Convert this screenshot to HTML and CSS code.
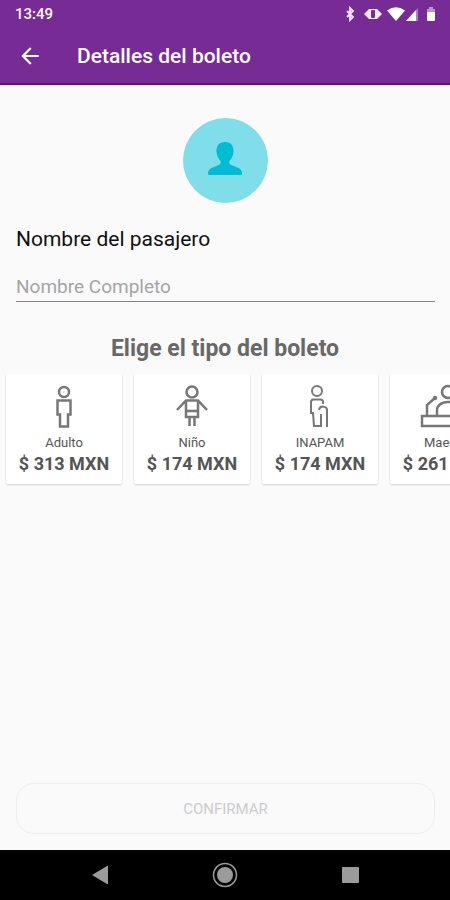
FILE: index.html
```html
<!DOCTYPE html>
<html lang="es">
<head>
  <meta charset="UTF-8">
  <meta name="viewport" content="width=device-width, initial-scale=1.0">
  <title>Detalles del boleto</title>
  <link rel="stylesheet" href="styles.css">
</head>
<body>
  <header class="header">
    <!-- status bar -->
    <div class="status">
      <span class="clock">13:49</span>
      <svg class="status-icons" viewBox="0 0 94 16" width="94" height="16" fill="#fff">
        <path d="M3 5l6 6-3 3V2l3 3-6 6" fill="none" stroke="#fff" stroke-opacity=".9" stroke-width="1.800"/>
        <path d="M20 8l3-3 2-2h8l2 2 3 3-3 3-2 2h-8l-2-2z" opacity=".9"/>
        <rect x="27" y="4" width="4" height="8" rx="1" fill="#772b95"/>
        <path d="M43 4.500Q52-2 61 4.500L52 15z"/>
        <path d="M62 15L74 2v13z" opacity=".4"/>
        <path d="M62 15l10-11v11z"/>
        <path d="M83 3h2V1h4v2h2v3h-8z" opacity=".5"/>
        <path d="M83 6h8v8q0 1-1 1h-6q-1 0-1-1z"/>
      </svg>
    </div>
    <div class="toolbar">
      <a class="back" href="#" aria-label="Volver">
        <svg viewBox="0 0 24 24" width="26" height="26" fill="#fff"><path d="M20 11H7.830l5.590-5.590L12 4l-8 8 8 8 1.410-1.410L7.830 13H20z"/></svg>
      </a>
      <h1 class="title">Detalles del boleto</h1>
    </div>
  </header>

  <main class="content">
    <div class="avatar">
      <svg viewBox="0 0 36 36" width="36" height="36" fill="#00bcd4">
        <path d="M18 1c6 0 9 4 8.500 10-.3 4-2 7-4 9-1 2 .5 3.500 3 4.500l6 2.500c2.500 1 3.500 3 3.500 5.500 0 1-.5 1.500-1.500 1.500h-31C1.500 34 1 33.500 1 32.500 1 30 2 28 4.500 27l6-2.500c2.500-1 4-2.500 3-4.500-2-2-3.700-5-4-9C9 5 12 1 18 1z"/>
      </svg>
    </div>

    <div class="field">
      <label class="field-label" for="nombre">Nombre del pasajero</label>
      <input class="field-input" id="nombre" type="text" placeholder="Nombre Completo">
    </div>

    <h2 class="subtitle">Elige el tipo del boleto</h2>
    <div class="tickets">
      <button class="ticket" type="button">
        <svg class="ticket-icon" viewBox="0 0 44 44" width="44" height="44">
          <circle cx="22" cy="7" r="5"/>
          <path d="M15.500 15.500h13v14h-2.500v12h-8v-12h-2.500z"/>
        </svg>
        <span class="ticket-name">Adulto</span>
        <strong class="ticket-price">$ 313 MXN</strong>
      </button>
      <button class="ticket" type="button">
        <svg class="ticket-icon" viewBox="0 0 44 44" width="44" height="44">
          <circle cx="22" cy="7" r="5.500"/>
          <path d="M7 25l9-9.500h12l9 9.500M16 16v16h12V16M16 26h12M19.500 33v8M24.500 33v8"/>
        </svg>
        <span class="ticket-name">Niño</span>
        <strong class="ticket-price">$ 174 MXN</strong>
      </button>
      <button class="ticket" type="button">
        <svg class="ticket-icon thin" viewBox="0 0 44 44" width="44" height="44">
          <circle cx="19" cy="6" r="5"/>
          <path d="M25 19v-2q0-2.500-2.500-2.500h-7q-2.500 0-2.500 2.500v11h2l1 13h7v-12M21 25c1-5 8-4 8 0v17"/>
        </svg>
        <span class="ticket-name">INAPAM</span>
        <strong class="ticket-price">$ 174 MXN</strong>
      </button>
      <button class="ticket" type="button">
        <svg class="ticket-icon" viewBox="0 0 44 44" width="44" height="44">
          <circle cx="22" cy="7" r="6"/>
          <path d="M-4 31h52v10H-4zM1 31V20l8-7M11 30v-5c0-4 4-8 11-8s11 4 11 8v5"/>
          <circle cx="9" cy="13" r="1"/>
        </svg>
        <span class="ticket-name">Maestro</span>
        <strong class="ticket-price">$ 261 MXN</strong>
      </button>
    </div>

    <button class="confirm" type="button" disabled>CONFIRMAR</button>
  </main>

  <!-- system navigation -->
  <nav class="navbar">
    <button class="nav-btn" type="button" aria-label="Atrás">
      <svg viewBox="0 0 28 28" width="28" height="28" fill="#9b9b9b"><path d="M6 14l15-9q1-.5 1 .5v17q0 1-1 .5z"/></svg>
    </button>
    <button class="nav-btn" type="button" aria-label="Inicio">
      <svg viewBox="0 0 28 28" width="28" height="28" fill="#9b9b9b"><circle cx="14" cy="14" r="8"/><circle cx="14" cy="14" r="11.500" fill="none" stroke="#9b9b9b" stroke-width="1.500"/></svg>
    </button>
    <button class="nav-btn" type="button" aria-label="Recientes">
      <svg viewBox="0 0 28 28" width="28" height="28" fill="#9b9b9b"><rect x="6" y="6" width="17" height="16" rx="1"/></svg>
    </button>
  </nav>
</body>
</html>
```
FILE: styles.css
```css
* {
  margin: 0;
  padding: 0;
  box-sizing: border-box;
}
body {
  display: flex;
  flex-direction: column;
  min-height: 100vh;
  font-family: Roboto, "Liberation Sans", sans-serif;
  background: #fafafa;
  overflow-x: hidden;
}
button {
  font-family: inherit;
  border: none;
  background: none;
}
.header {
  color: #fff;
  background: #772b95;
  border-bottom: 2px solid #650c82;
}
.status {
  display: flex;
  justify-content: space-between;
  align-items: center;
  height: 28px;
  padding: 0 12px 0 15px;
}
.clock {
  font-size: 15px;
  font-weight: 500;
}
.toolbar {
  display: flex;
  align-items: center;
  gap: 34px;
  height: 55px;
  padding: 0 17px;
}
.back {
  display: flex;
}
.title {
  font-size: 21px;
  font-weight: 500;
}
.content {
  flex: 1;
  display: flex;
  flex-direction: column;
  padding-top: 33px;
}
.avatar {
  display: flex;
  justify-content: center;
  align-items: center;
  align-self: center;
  width: 85px;
  height: 85px;
  padding-bottom: 4px;
  border-radius: 50%;
  background: #80deea;
}
.field {
  display: flex;
  flex-direction: column;
  gap: 20px;
  padding: 23px 15px 0 16px;
}
.field-label {
  font-size: 21px;
  line-height: 26px;
  color: #111;
}
.field-input {
  height: 30px;
  border: none;
  border-bottom: 1px solid #858585;
  outline: none;
  background: none;
  font-family: inherit;
  font-size: 19px;
}
.field-input::placeholder {
  color: #a5a5a5;
}
.subtitle {
  margin-top: 32px;
  font-size: 23px;
  font-weight: 700;
  line-height: 30px;
  text-align: center;
  color: #686868;
}
.tickets {
  display: flex;
  gap: 12px;
  padding: 10px 6px;
  overflow: hidden;
}
.ticket {
  flex: 0 0 116px;
  display: flex;
  flex-direction: column;
  align-items: center;
  height: 110px;
  padding-top: 11px;
  border-radius: 2px;
  background: #fff;
  box-shadow: 0 1px 2px rgba(0, 0, 0, .16);
}
.ticket-icon {
  overflow: visible;
  fill: none;
  stroke: #777;
  stroke-width: 2.5;
}
.ticket-icon.thin {
  stroke-width: 2;
}
.ticket-name {
  font-size: 13px;
  line-height: 16px;
  margin-top: 6px;
  color: #555;
}
.ticket-price {
  font-size: 18px;
  font-weight: 700;
  line-height: 26px;
  color: #555;
}
.confirm {
  height: 51px;
  margin: auto 15px 16px 16px;
  border: 1px solid #eee;
  border-radius: 18px;
  font-size: 15px;
  color: #ccc;
}
.navbar {
  display: flex;
  justify-content: center;
  gap: 97px;
  height: 50px;
  background: #000;
}
.nav-btn {
  display: flex;
  align-items: center;
}
```
